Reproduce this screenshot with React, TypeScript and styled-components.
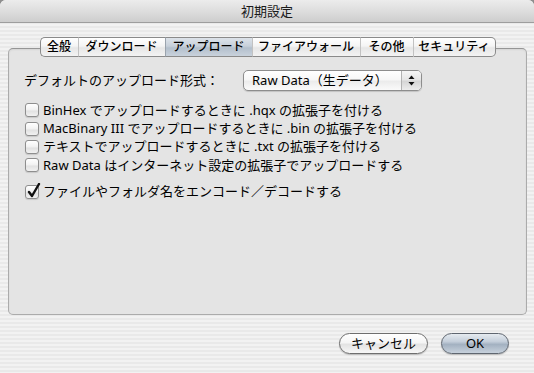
import React from "react";
import styled, { createGlobalStyle, css } from "styled-components";

const GlobalStyle = createGlobalStyle`
  *, *::before, *::after { box-sizing: border-box; }
  html, body { margin: 0; padding: 0; background: #8e8e8e; }
  body {
    font-family: "Noto Sans", "Noto Sans CJK JP", sans-serif;
    color: #000;
  }
`;

const Window = styled.div`
  width: 534px;
  height: 373px;
  display: flex;
  flex-direction: column;
  border-radius: 6px 6px 0 0;
  overflow: hidden;
  background: repeating-linear-gradient(
    to bottom,
    #f2f2f2 0px,
    #f2f2f2 2px,
    #e9e9e9 2px,
    #e9e9e9 4px
  );
`;

const TitleBar = styled.div`
  height: 23px;
  flex-shrink: 0;
  display: flex;
  align-items: center;
  justify-content: center;
  background: linear-gradient(to bottom, #ececec 0%, #dcdcdc 55%, #cdcdcd 100%);
  border-bottom: 1px solid #9d9d9d;
  font-size: 13px;
  line-height: 1;
  color: #1a1a1a;
  padding-top: 1px;
`;

const Content = styled.div`
  flex: 1;
  display: flex;
  flex-direction: column;
  padding: 14px 7px 0 8px;
`;

const TabBar = styled.div`
  display: flex;
  justify-content: center;
  height: 20px;
  margin-bottom: -9px;
  position: relative;
  z-index: 1;
`;

const Tab = styled.div<{ $w: number; $active?: boolean; $first?: boolean; $last?: boolean }>`
  width: ${(p) => p.$w}px;
  height: 20px;
  display: flex;
  align-items: center;
  justify-content: center;
  font-size: 12px;
  line-height: 1;
  font-weight: 500;
  color: #000;
  border-top: 1px solid #8a8a8a;
  border-bottom: 1px solid #8a8a8a;
  border-left: 1px solid #c2c2c2;
  background: linear-gradient(to bottom, #ffffff 0%, #f4f4f4 45%, #e6e6e6 55%, #f3f3f3 100%);
  ${(p) =>
    p.$first &&
    css`
      border-left: 1px solid #8a8a8a;
      border-radius: 5px 0 0 5px;
    `}
  ${(p) =>
    p.$last &&
    css`
      border-right: 1px solid #8a8a8a;
      border-radius: 0 5px 5px 0;
    `}
  ${(p) =>
    p.$active &&
    css`
      background: linear-gradient(to bottom, #dde3ea 0%, #c7d0da 45%, #b3bfcc 55%, #c9d2dc 100%);
      border-left-color: #9aa3ad;
    `}
`;

const Panel = styled.div`
  height: 267px;
  border: 1px solid #ababab;
  border-top-color: #959595;
  border-radius: 5px;
  background: #e4e4e4;
  box-shadow: inset 0 1px 2px rgba(0, 0, 0, 0.07);
  padding: 20px 16px 0 15px;
  display: flex;
  flex-direction: column;
`;

const FormRow = styled.div`
  display: flex;
  align-items: center;
  height: 22px;
  gap: 24px;
`;

const Label = styled.span`
  font-size: 13px;
  line-height: 1;
  white-space: nowrap;
`;

const Popup = styled.div`
  width: 179px;
  height: 21px;
  display: flex;
  border: 1px solid #8d8d8d;
  border-radius: 5px;
  background: linear-gradient(to bottom, #ffffff 0%, #f7f7f7 45%, #ececec 55%, #fafafa 100%);
  box-shadow: 0 1px 1px rgba(0, 0, 0, 0.15);
  overflow: hidden;
`;

const PopupText = styled.span`
  flex: 1;
  display: flex;
  align-items: center;
  padding-left: 8px;
  font-size: 13px;
  line-height: 1;
  white-space: nowrap;
`;

const PopupArrows = styled.span`
  width: 20px;
  display: flex;
  align-items: center;
  justify-content: center;
  border-left: 1px solid #b2b2b2;
  background: linear-gradient(to bottom, #f5f5f5 0%, #e6e6e6 45%, #d6d6d6 55%, #ececec 100%);
`;

const CheckList = styled.div`
  display: flex;
  flex-direction: column;
  margin-top: 10px;
`;

const CheckRow = styled.label<{ $gap?: number }>`
  display: flex;
  align-items: center;
  height: 18.4px;
  margin-top: ${(p) => p.$gap ?? 0}px;
  font-size: 13px;
  line-height: 1;
  white-space: nowrap;
`;

const Box = styled.span`
  position: relative;
  width: 14px;
  height: 14px;
  margin: 0 4px 0 1px;
  flex-shrink: 0;
  border: 1px solid #8e8e8e;
  border-radius: 3px;
  background: linear-gradient(to bottom, #ffffff 0%, #f3f3f3 45%, #e2e2e2 60%, #f1f1f1 100%);
  box-shadow: 0 1px 1px rgba(0, 0, 0, 0.12);
`;

const Check = styled.svg`
  position: absolute;
  left: 1px;
  top: -3px;
`;

const ButtonRow = styled.div`
  display: flex;
  justify-content: flex-end;
  gap: 13px;
  margin-top: 18px;
  padding-right: 18px;
`;

const Button = styled.div<{ $w: number; $primary?: boolean }>`
  width: ${(p) => p.$w}px;
  height: 21px;
  display: flex;
  align-items: center;
  justify-content: center;
  border: 1px solid #6e6e6e;
  border-radius: 11px;
  font-size: 13px;
  line-height: 1;
  color: #000;
  background: linear-gradient(to bottom, #ffffff 0%, #f5f5f5 45%, #e3e3e3 55%, #f7f7f7 100%);
  box-shadow: 0 1px 1px rgba(0, 0, 0, 0.2);
  ${(p) =>
    p.$primary &&
    css`
      border-color: #5f6670;
      background: linear-gradient(to bottom, #e6ebf0 0%, #c4ceda 40%, #a3b1c1 55%, #c7d1dc 100%);
    `}
`;

const tabs = [
  { label: "全般", w: 38 },
  { label: "ダウンロード", w: 87 },
  { label: "アップロード", w: 87, active: true },
  { label: "ファイアウォール", w: 108 },
  { label: "その他", w: 53 },
  { label: "セキュリティ", w: 83 },
];

const options = [
  { text: "BinHex でアップロードするときに .hqx の拡張子を付ける", checked: false },
  { text: "MacBinary III でアップロードするときに .bin の拡張子を付ける", checked: false },
  { text: "テキストでアップロードするときに .txt の拡張子を付ける", checked: false },
  { text: "Raw Data はインターネット設定の拡張子でアップロードする", checked: false },
];

export default function App() {
  return (
    <>
      <GlobalStyle />
      <Window>
        <TitleBar>初期設定</TitleBar>
        <Content>
          <TabBar>
            {tabs.map((t, i) => (
              <Tab
                key={t.label}
                $w={t.w}
                $active={t.active}
                $first={i === 0}
                $last={i === tabs.length - 1}
              >
                {t.label}
              </Tab>
            ))}
          </TabBar>
          <Panel>
            <FormRow>
              <Label>デフォルトのアップロード形式：</Label>
              <Popup>
                <PopupText>Raw Data（生データ）</PopupText>
                <PopupArrows>
                  <svg width="7" height="11" viewBox="0 0 7 11">
                    <path d="M3.5 0.5 L6.5 4 L0.5 4 Z" fill="#111" />
                    <path d="M3.5 10.5 L6.5 7 L0.5 7 Z" fill="#111" />
                  </svg>
                </PopupArrows>
              </Popup>
            </FormRow>
            <CheckList>
              {options.map((o) => (
                <CheckRow key={o.text}>
                  <Box />
                  {o.text}
                </CheckRow>
              ))}
              <CheckRow $gap={8}>
                <Box>
                  <Check width="14" height="16" viewBox="0 0 14 16">
                    <path
                      d="M2 9 L5 13 L12 1"
                      fill="none"
                      stroke="#111"
                      strokeWidth="2.4"
                      strokeLinecap="round"
                      strokeLinejoin="round"
                    />
                  </Check>
                </Box>
                ファイルやフォルダ名をエンコード／デコードする
              </CheckRow>
            </CheckList>
          </Panel>
          <ButtonRow>
            <Button $w={89}>キャンセル</Button>
            <Button $w={68} $primary>
              OK
            </Button>
          </ButtonRow>
        </Content>
      </Window>
    </>
  );
}
